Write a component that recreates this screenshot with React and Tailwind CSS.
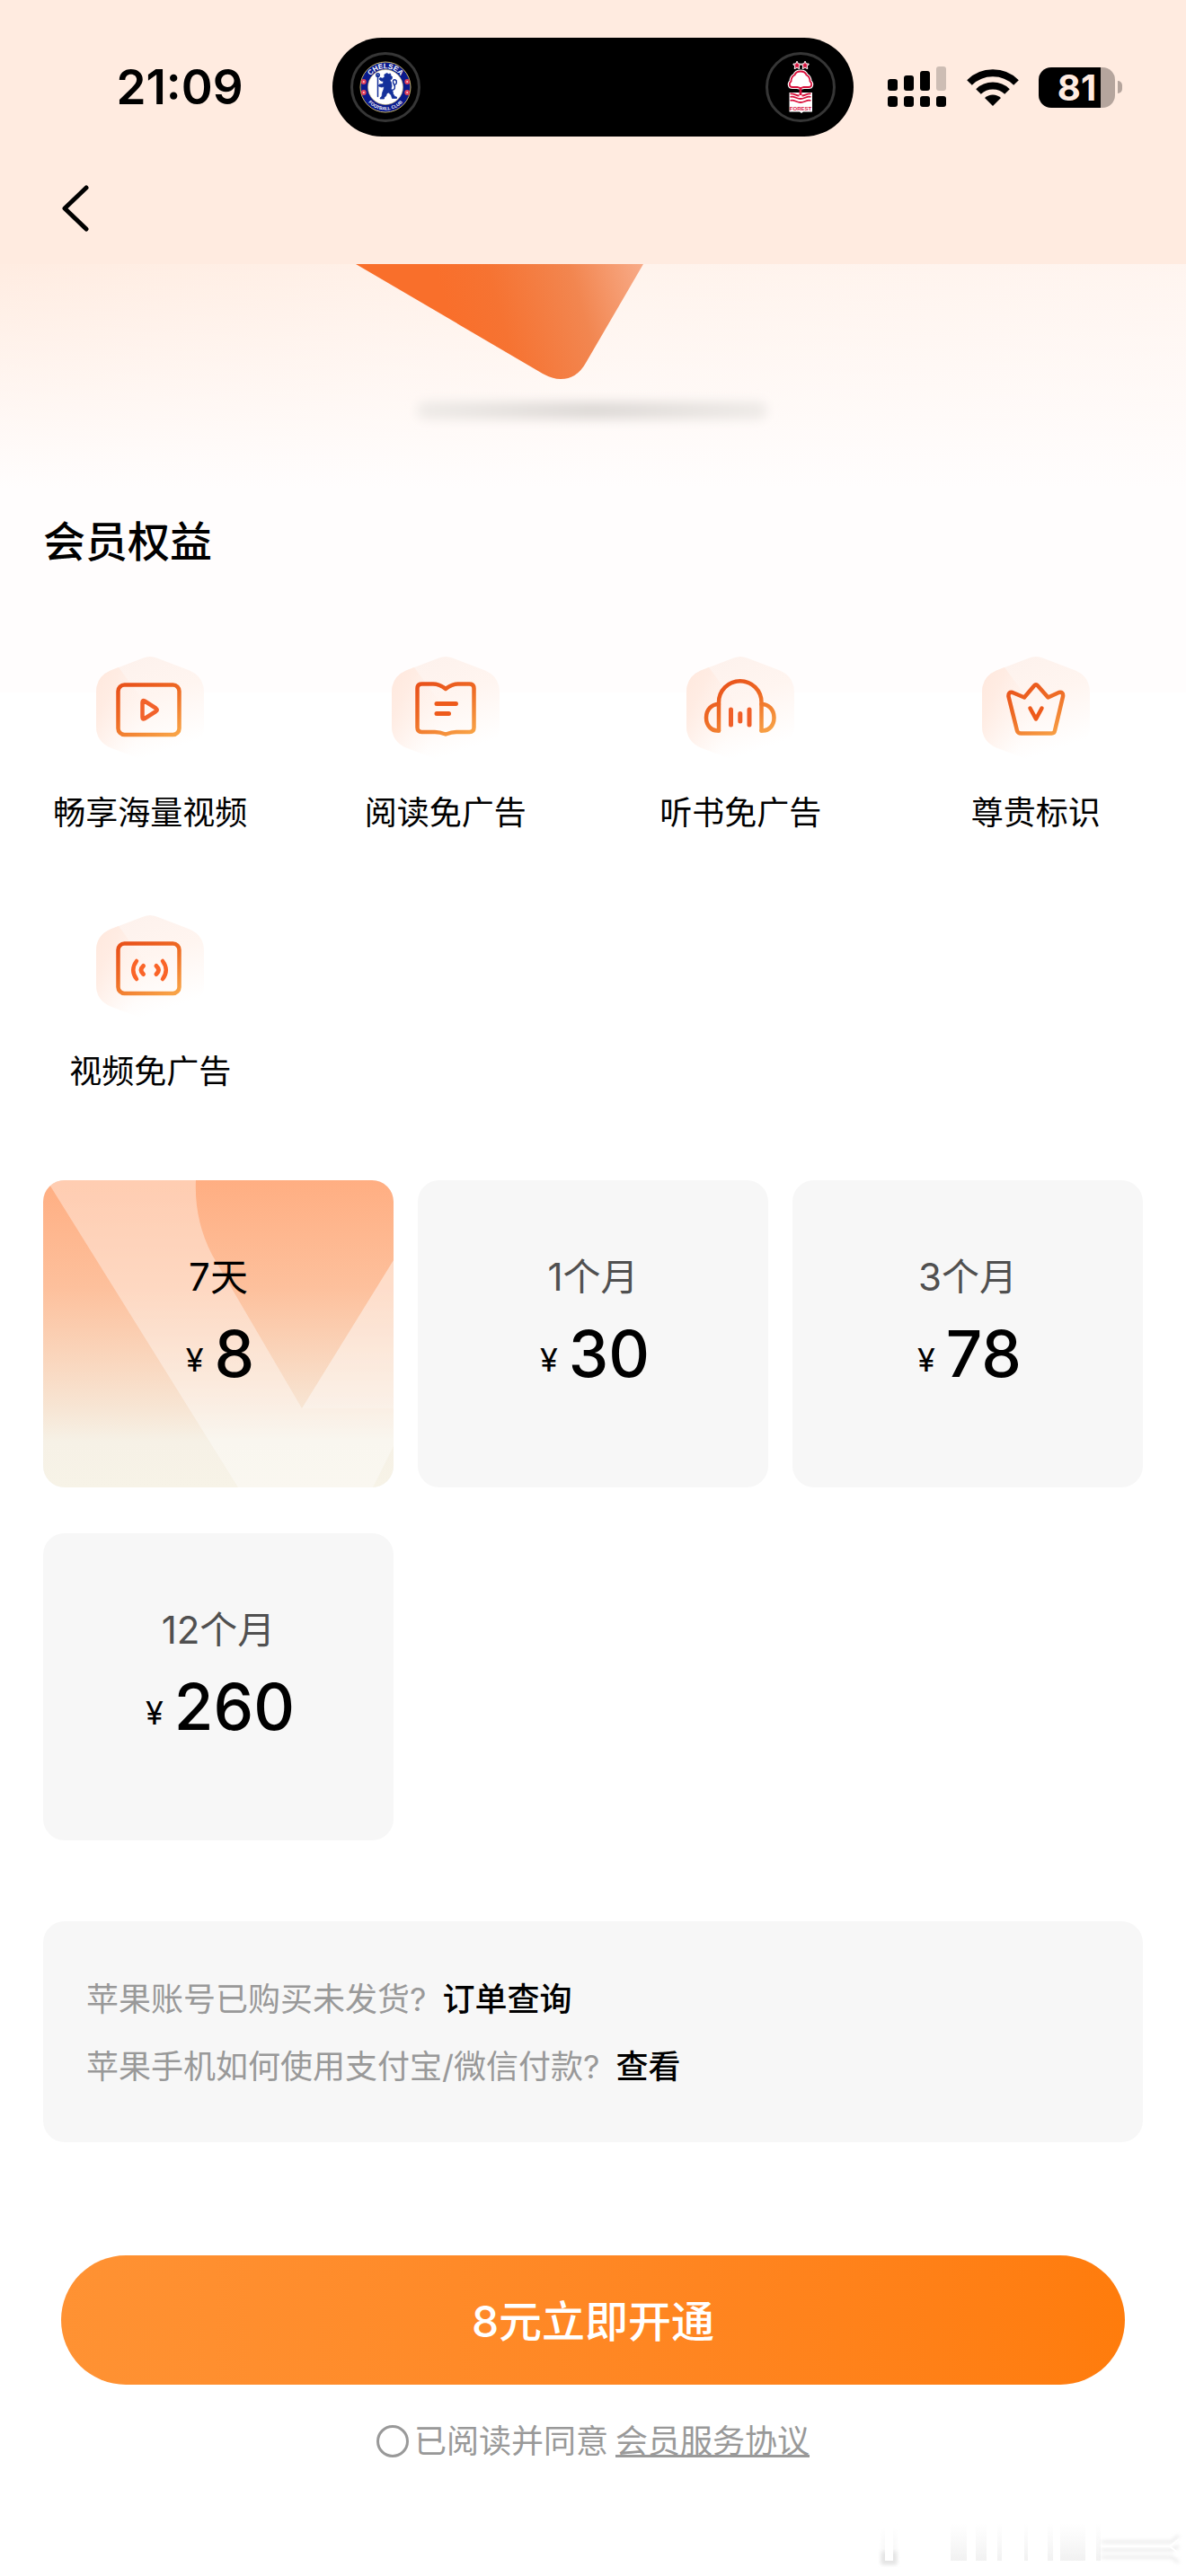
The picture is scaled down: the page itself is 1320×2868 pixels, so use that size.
import { useState } from 'react';

function ChelseaCrest() {
  const rosettes = [[4.8, 23], [4.8, 35], [53.2, 23], [53.2, 35]];
  return (
    <span className="flex size-[78px] items-center justify-center rounded-full border-[3px] border-[#363636]">
      <svg className="size-[58px]" viewBox="0 0 58 58" role="img" aria-label="Chelsea">
        <defs>
          <path id="crest-top" d="M8.2 29a20.800 20.800 0 0 1 41.600 0" />
          <path id="crest-bottom" d="M3.500 29a25.500 25.500 0 0 0 51 0" />
        </defs>
        <circle cx="29" cy="29" r="28" fill="#0a1a8c" stroke="#c9b56a" strokeWidth="1" />
        <circle cx="29" cy="29" r="19.500" fill="#fff" stroke="#c9b56a" strokeWidth="0.6" />
        <text fill="#fff" fontSize="8" fontWeight="700" fontFamily="Liberation Sans, sans-serif" textAnchor="middle">
          <textPath href="#crest-top" startOffset="50%">CHELSEA</textPath>
        </text>
        <text fill="#fff" fontSize="5" fontWeight="700" fontFamily="Liberation Sans, sans-serif" textAnchor="middle">
          <textPath href="#crest-bottom" startOffset="50%">FOOTBALL CLUB</textPath>
        </text>
        {rosettes.map(([x, y]) => (
          <g key={`${x}-${y}`}>
            <circle cx={x} cy={y} r="2.9" fill="#e2405a" />
            <circle cx={x} cy={y} r="1" fill="#ffc9cf" />
          </g>
        ))}
        <g fill="#14309a" stroke="#14309a" strokeLinejoin="round" strokeLinecap="round">
          <path
            d="M28 15l2.500-1.500 2 1 2-.5.5 2.500 1.500 1-.5 2.500-2 1 1.500 3 .5 4-1 3.500 2 2 .5 3 2 3 2 .5v1.500h-5l-1-3.500-3-3-2 1-1 3-2 1.500v1.500h-4.500l.5-1.500 1.500-1 .5-4 1.500-4 .5-3-3 .5-3-1 .5-2 4-.5 1-3-3-.5-2-2 1-1.500 3 .8 2-1.800z"
            strokeWidth="0.8"
          />
          <path d="M20.500 15.500v24" strokeWidth="1.500" fill="none" />
          <circle cx="20.500" cy="15.500" r="1.800" fill="none" strokeWidth="1.500" />
          <path d="M35.500 32c4 1 5-3 3-6s-1-6 1.500-5 1 5 0 5" strokeWidth="1.500" fill="none" />
        </g>
      </svg>
    </span>
  );
}

function ForestCrest() {
  return (
    <span className="flex size-[78px] items-center justify-center rounded-full border-[3px] border-[#363636]">
      <svg className="h-[60px] w-[30px]" viewBox="0 0 30 60" role="img" aria-label="Nottingham Forest">
        <g fill="#d9113c" stroke="#fff" strokeWidth="2" strokeLinejoin="round" paintOrder="stroke">
          <path d="M11 2l1 2.500 2.600.1-2 1.700.7 2.700-2.300-1.500L8.700 9l.7-2.700-2-1.700L10 4.500z" />
          <path d="M20 2l1 2.500 2.600.1-2 1.700.7 2.700-2.300-1.500L17.700 9l.7-2.700-2-1.700L19 4.500z" />
        </g>
        <path d="M2.500 36H28v21.500H18l-2 1.500-2-1.500H2.500z" fill="#fff" />
        <path
          d="M15 12.500c3.500 0 5.500 1 6.500 4 3 1.500 4 4 4 7 3 2.500 2 6.500-1.500 6.500h-5.500L15 31l-3.500-1H6c-3.500 0-4.500-4-1.500-6.500 0-3 1-5.500 4-7 1-3 3-4 6.500-4z"
          fill="#fff"
          stroke="#fff"
          strokeWidth="4"
        />
        <path
          d="M15 12.500c3.500 0 5.500 1 6.500 4 3 1.500 4 4 4 7 3 2.500 2 6.500-1.500 6.500h-5.500L15 31l-3.500-1H6c-3.500 0-4.500-4-1.500-6.500 0-3 1-5.500 4-7 1-3 3-4 6.500-4z"
          fill="#fff"
          stroke="#d9113c"
          strokeWidth="1.800"
        />
        <path d="M13.600 31h2.800v8h-2.800z" fill="#d9113c" />
        <g fill="none" stroke="#d9113c" strokeWidth="1.800">
          <path d="M3.500 37.500c4-1 6 2 10 2M26.500 37.500c-4-1-6 2-10 2" />
          <path d="M3.500 41c4-1.500 7 2 11.500 2s7.500-3.500 11.500-2" />
          <path d="M3.500 45c4-1.500 7 2 11.500 2s7.500-3.500 11.500-2" />
        </g>
        <text x="15" y="56" fill="#d9113c" fontSize="6" fontWeight="700" fontFamily="Liberation Sans, sans-serif" textAnchor="middle">FOREST</text>
      </svg>
    </span>
  );
}

function StatusBar() {
  return (
    <div className="grid grid-cols-[1fr_580px_1fr] items-center pt-[42px]">
      <time className="pl-[30px] text-center text-[53px] leading-[64px] font-semibold">21:09</time>
      <div className="flex h-[110px] items-center justify-between rounded-full bg-black px-5">
        <ChelseaCrest />
        <ForestCrest />
      </div>
      <div className="flex items-center pl-[38px]">
        <svg className="h-[46px] w-[66px] shrink-0" viewBox="0 0 66 46" aria-label="信号">
          <rect x="0" y="14" width="11" height="13" rx="3" />
          <rect x="18" y="10" width="11" height="17" rx="3" />
          <rect x="36" y="5" width="11" height="22" rx="3" />
          <rect x="54" y="0" width="11" height="27" rx="3" fill="#cdbdb4" />
          <rect x="0" y="33" width="11" height="12" rx="3" />
          <rect x="18" y="33" width="11" height="12" rx="3" />
          <rect x="36" y="33" width="11" height="12" rx="3" />
          <rect x="54" y="33" width="11" height="12" rx="3" />
        </svg>
        <svg className="ml-[22px] h-[42px] w-[58px] shrink-0" viewBox="0 0 58 42" aria-label="无线网络">
          <g fill="none" stroke="#000" strokeWidth="8">
            <path d="M3 16a37 37 0 0 1 52 0" />
            <path d="M13 26a23 23 0 0 1 32 0" />
          </g>
          <path d="M29 42l-9-9a13 13 0 0 1 18 0z" />
        </svg>
        <div className="ml-[22px] flex items-center gap-[3px]">
          <div className="flex h-[45px] w-[85px] items-center justify-center rounded-[14px] bg-linear-to-r from-black from-81% to-[#b5a59d] to-81% text-[40px] leading-[45px] font-bold text-[#ffebe0]">
            81
          </div>
          <span className="h-[14px] w-[5px] rounded-r-full bg-[#b5a59d]" />
        </div>
      </div>
    </div>
  );
}

function HeroArt() {
  return (
    <svg className="mx-auto block h-[200px] w-[540px]" viewBox="0 0 540 200" aria-hidden="true">
      <defs>
        <linearGradient id="gem" gradientUnits="userSpaceOnUse" x1="110" y1="60" x2="325" y2="0">
          <stop offset="0" stopColor="#f96f2b" />
          <stop offset="0.250" stopColor="#f67332" />
          <stop offset="0.650" stopColor="#f28650" />
          <stop offset="1" stopColor="#f8ab88" />
        </linearGradient>
        <linearGradient id="shade" x1="0" y1="0" x2="1" y2="0">
          <stop offset="0" stopColor="#efebe8" />
          <stop offset="0.500" stopColor="#dedad7" />
          <stop offset="1" stopColor="#efebe8" />
        </linearGradient>
        <filter id="soft" x="-10%" y="-100%" width="120%" height="300%">
          <feGaussianBlur stdDeviation="6" />
        </filter>
      </defs>
      <rect x="74" y="153" width="390" height="20" rx="10" fill="url(#shade)" filter="url(#soft)" />
      <path d="M6 0H326L262 110Q252 128 234 128Q225 128 214 122Z" fill="url(#gem)" />
    </svg>
  );
}

function VideoGlyph() {
  return (
    <>
      <rect x="24.500" y="32.500" width="68" height="55.500" rx="7" />
      <path d="M51.500 52v16.500q0 3 2.500 1.500l12.500-8q2.500-1.800 0-3.500L54 50.500q-2.500-1.500-2.500 1.500z" stroke="#f2622b" />
    </>
  );
}

function BookGlyph() {
  return (
    <>
      <path d="M33.500 31.500H46c6 0 9 1.500 14 5.500 5-4 8-5.500 14-5.500h12.500q5 0 5 5v43.500q0 5-5 5H72c-5 0-8 1-12 2.500-4-1.500-7-2.500-12-2.500H33.500q-5 0-5-5V36.500q0-5 5-5z" />
      <path d="M50 53.500h21.500M50 64.500h13.500" stroke="#ee5a1b" strokeWidth="5" />
    </>
  );
}

function HeadphoneGlyph() {
  return (
    <>
      <path d="M36 83.500V52a23.500 23.500 0 0 1 47.500 0v31.500" />
      <path d="M36 54c-8 0-14 6-14 15s6 14.500 12 14.500h2M83.500 54c8 0 14 6 14 15s-6 14.500-12 14.500h-2" />
      <path d="M49.500 60v17M59.800 64.500v8.500M70 60v17" stroke="#f0602a" strokeWidth="5" />
    </>
  );
}

function CrownGlyph() {
  return (
    <>
      <path d="M43.500 86.500h34q3 0 3.500-3l9-38q.8-5.500-4.500-4.500L73.500 46.500 62 33.500q-2-2.500-4 0L47 46.500 34 41q-5-1-4.500 4.500l9.500 38q.8 3 4.500 3z" />
      <path d="M53.500 58.500l6.500 12 6.500-12" stroke="#ee5a1b" />
    </>
  );
}

function AdGlyph() {
  return (
    <>
      <rect x="24.500" y="32.500" width="68" height="55.500" rx="7" />
      <g stroke="#fa6428">
        <path d="M45 52q-7.500 10 0 20M74 52q7.500 10 0 20" />
        <path d="M52.500 57.500q-5 4.500 0 9M67 57.500q5 4.500 0 9" strokeWidth="5" />
      </g>
    </>
  );
}

const benefits = [
  { label: '畅享海量视频', Glyph: VideoGlyph },
  { label: '阅读免广告', Glyph: BookGlyph },
  { label: '听书免广告', Glyph: HeadphoneGlyph },
  { label: '尊贵标识', Glyph: CrownGlyph },
  { label: '视频免广告', Glyph: AdGlyph },
];

function BadgeDefs() {
  return (
    <svg className="absolute size-0" aria-hidden="true">
      <defs>
        <linearGradient id="badge" x1="0" y1="0" x2="0.350" y2="1">
          <stop offset="0" stopColor="#fdf1ec" />
          <stop offset="0.500" stopColor="#fff5f0" />
          <stop offset="1" stopColor="#ffffff" />
        </linearGradient>
        <linearGradient id="badge-side" x1="0" y1="0" x2="0.900" y2="0.800">
          <stop offset="0" stopColor="#ffe8dd" />
          <stop offset="0.300" stopColor="#ffece3" />
          <stop offset="0.900" stopColor="#fff5f0" stopOpacity="0" />
        </linearGradient>
        <linearGradient id="line" gradientUnits="userSpaceOnUse" x1="45" y1="28" x2="78" y2="92">
          <stop offset="0" stopColor="#e9531b" />
          <stop offset="0.400" stopColor="#ee6a24" />
          <stop offset="1" stopColor="#f8a246" />
        </linearGradient>
      </defs>
    </svg>
  );
}

function Benefit({ label, Glyph }) {
  return (
    <li className="flex flex-col items-center">
      <svg className="size-[120px]" viewBox="0 0 120 120" fill="none" aria-hidden="true">
        <path d="M50 3.500q10-5 20 0l34 13q16 7 16 24v38q0 17-16 24l-34 13q-10 5-20 0l-34-13q-16-7-16-24v-38q0-17 16-24z" fill="url(#badge)" />
        <path d="M25 13l14 19 21 27v58q-5 0-10-1.500l-34-13q-16-7-16-24v-38q0-17 16-24z" fill="url(#badge-side)" />
        <g stroke="url(#line)" strokeWidth="4.500" strokeLinecap="round" strokeLinejoin="round">
          <Glyph />
        </g>
      </svg>
      <span className="mt-[29px] text-[36px] leading-[52px]">{label}</span>
    </li>
  );
}

const plans = [
  { term: '7天', price: 8 },
  { term: '1个月', price: 30 },
  { term: '3个月', price: 78 },
  { term: '12个月', price: 260 },
];

function SelectedBackdrop() {
  return (
    <svg className="absolute inset-0 size-full" viewBox="0 0 390 342" preserveAspectRatio="none" aria-hidden="true">
      <defs>
        <linearGradient id="peach" x1="0" y1="0" x2="0" y2="1">
          <stop offset="0" stopColor="#ffae82" />
          <stop offset="0.350" stopColor="#fdc09c" />
          <stop offset="0.750" stopColor="#f7e6d5" />
          <stop offset="0.850" stopColor="#f6f1e6" />
          <stop offset="1" stopColor="#f7f3e7" />
        </linearGradient>
      </defs>
      <path d="M0 0h390v342H0z" fill="url(#peach)" />
      <path d="M4 0L217 342H367L390 296V89L288 254L188 83Q168 44 170 0Z" fill="#fff" fillOpacity="0.380" />
      <path d="M390 89L288 254L390 254Z" fill="#fff" fillOpacity="0.150" />
    </svg>
  );
}

function Plan({ plan, selected, onSelect }) {
  return (
    <button
      type="button"
      aria-pressed={selected}
      onClick={onSelect}
      className="relative flex h-[342px] cursor-pointer flex-col items-center overflow-hidden rounded-3xl bg-[#f7f7f7] pt-[78px]"
    >
      {selected && <SelectedBackdrop />}
      <span className={selected ? 'relative text-[42px] leading-[60px]' : 'relative text-[42px] leading-[60px] text-[#505050]'}>
        {plan.term}
      </span>
      <span className="relative mt-[13px] flex items-end gap-3 pl-1">
        <span className="text-[36px] leading-[70px]">¥</span>
        <span className="text-[71px] leading-[84px] font-medium">{plan.price}</span>
      </span>
    </button>
  );
}

function CornerMark() {
  return (
    <svg className="block h-[61px] w-[344px]" viewBox="0 2 344 61" aria-hidden="true">
      <defs>
        <linearGradient id="fade" x1="0" y1="0" x2="0" y2="1">
          <stop offset="0" stopColor="#f4f4f4" stopOpacity="0" />
          <stop offset="1" stopColor="#f1f1f1" />
        </linearGradient>
        <filter id="mark-soft" x="-20%" y="-20%" width="140%" height="140%">
          <feGaussianBlur stdDeviation="2" />
        </filter>
      </defs>
      <rect x="5" y="8" width="17" height="44" fill="url(#fade)" filter="url(#mark-soft)" />
      <rect x="5" y="38" width="17" height="14" fill="#e4e4e4" filter="url(#mark-soft)" />
      <rect x="9" y="6" width="9" height="42" fill="#fff" />
      <g fill="url(#fade)">
        <rect x="82" y="6" width="18" height="42" />
        <rect x="110" y="6" width="12" height="42" />
        <rect x="134" y="6" width="5" height="42" />
        <rect x="164" y="6" width="4" height="42" />
        <rect x="190" y="6" width="6" height="42" />
        <rect x="204" y="6" width="28" height="42" />
        <rect x="244" y="6" width="5" height="42" />
      </g>
      <g fill="none" stroke="#dedede" strokeWidth="2" filter="url(#mark-soft)">
        <path d="M250 27h78l8-7M250 36h78l8-4M250 44h78l8 6" />
      </g>
      <path d="M250 32h76l10-8M326 32l10 8" fill="none" stroke="#fff" strokeWidth="2" />
    </svg>
  );
}

export default function App() {
  const [chosen, setChosen] = useState(0);
  const [agreed, setAgreed] = useState(false);

  return (
    <div className="bg-white font-['Inter','Noto_Sans_CJK_SC',sans-serif] text-black" lang="zh-CN">
      <header className="bg-[#ffebe0]">
        <StatusBar />
        <nav className="px-12 pt-[50px] pb-8">
          <button type="button" aria-label="返回" className="block cursor-pointer">
            <svg className="size-[60px]" viewBox="0 0 60 60" fill="none" stroke="#000" strokeWidth="5" strokeLinecap="round" strokeLinejoin="round">
              <path d="M48 7L24 30l24 23" />
            </svg>
          </button>
        </nav>
      </header>

      <main className="bg-[linear-gradient(to_bottom,rgba(255,255,255,0)_0px,#fffdfd_250px,#fffdfd_476px,#ffffff_477px),linear-gradient(100deg,#ffece1_0%,#fff3ec_40%,#fff6f2_100%)]">
        <BadgeDefs />
        <HeroArt />

        <section className="mt-[77px]">
          <h1 className="px-12 text-[47px] leading-[64px] font-medium">会员权益</h1>
          <ul className="mt-[95px] grid grid-cols-4 gap-y-[87px] px-[3px]">
            {benefits.map((b) => (
              <Benefit key={b.label} {...b} />
            ))}
          </ul>
        </section>

        <section className="mt-[95px] grid grid-cols-3 gap-x-[27px] gap-y-[51px] px-12" aria-label="会员套餐">
          {plans.map((plan, i) => (
            <Plan key={plan.term} plan={plan} selected={i === chosen} onSelect={() => setChosen(i)} />
          ))}
        </section>

        <section className="mx-12 mt-[90px] rounded-3xl bg-[#f7f7f7] px-12 pt-[50px] pb-[46px] text-[36px] leading-[75px] text-[#999]">
          <p className="flex gap-[18px]">
            苹果账号已购买未发货?
            <a href="#orders" className="font-medium text-black">订单查询</a>
          </p>
          <p className="flex gap-[18px]">
            苹果手机如何使用支付宝/微信付款?
            <a href="#payment" className="font-medium text-black">查看</a>
          </p>
        </section>

        <section className="mt-[126px] px-[68px]">
          <button
            type="button"
            className="block h-36 w-full cursor-pointer rounded-full bg-linear-to-r from-[#ff9233] to-[#ff7c0c] pt-1 text-[48px] leading-[64px] font-medium text-white"
          >
            {plans[chosen].price}元立即开通
          </button>
          <div className="mt-[37px] flex items-center justify-center text-[36px] leading-[52px] text-[#999]">
            <input
              id="agree"
              type="checkbox"
              checked={agreed}
              onChange={(e) => setAgreed(e.target.checked)}
              className="size-9 cursor-pointer appearance-none rounded-full border-[3px] border-[#999] checked:bg-[#ff7c0c]"
            />
            <label htmlFor="agree" className="ml-1.5">已阅读并同意</label>
            <a href="#terms" className="ml-2 underline decoration-[3px] underline-offset-2">会员服务协议</a>
          </div>
        </section>

        <footer className="mt-[61px] flex justify-end">
          <CornerMark />
        </footer>
      </main>
    </div>
  );
}
